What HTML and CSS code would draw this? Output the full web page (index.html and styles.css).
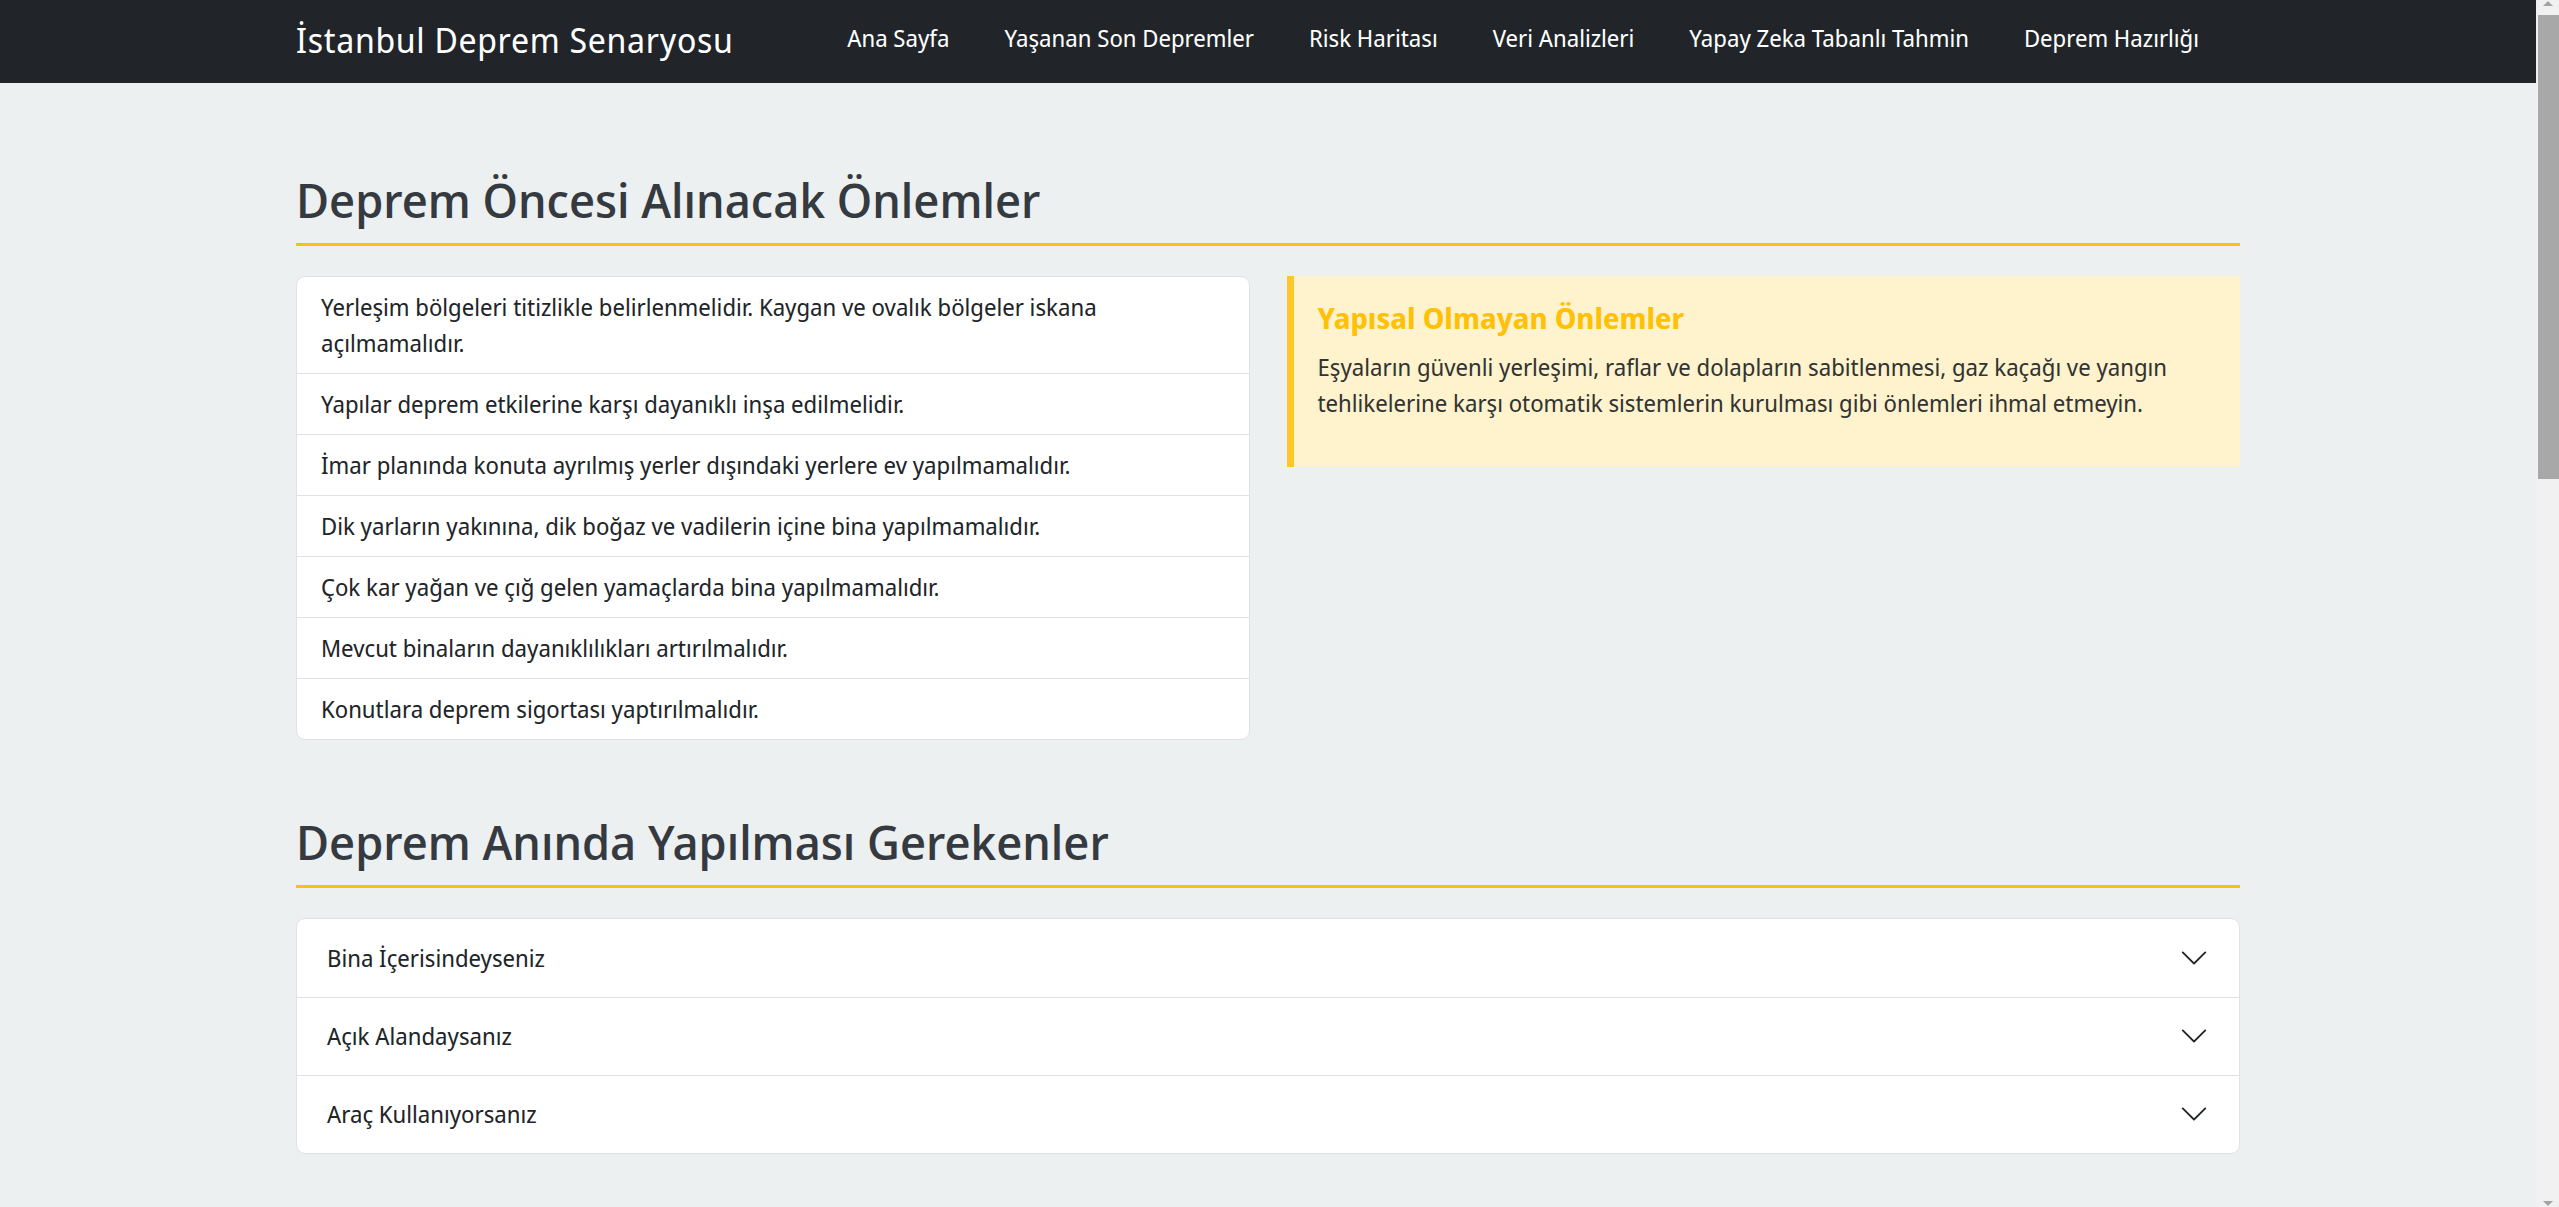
FILE: index.html
```html
<!DOCTYPE html>
<html lang="tr">
<head>
<meta charset="utf-8">
<title>İstanbul Deprem Senaryosu</title>
<link rel="stylesheet" href="styles.css">
</head>
<body>
<div class="page">
  <nav class="navbar">
    <div class="container nav-inner">
      <a class="brand" href="#">İstanbul Deprem Senaryosu</a>
      <ul class="nav-links">
        <li><a href="#">Ana Sayfa</a></li>
        <li><a href="#">Yaşanan Son Depremler</a></li>
        <li><a href="#">Risk Haritası</a></li>
        <li><a href="#">Veri Analizleri</a></li>
        <li><a href="#">Yapay Zeka Tabanlı Tahmin</a></li>
        <li><a href="#">Deprem Hazırlığı</a></li>
      </ul>
    </div>
  </nav>

  <main class="container main">
    <section class="section">
      <h2 class="section-title">Deprem Öncesi Alınacak Önlemler</h2>
      <div class="two-col">
        <ul class="list-group">
          <li class="list-item">Yerleşim bölgeleri titizlikle belirlenmelidir. Kaygan ve ovalık bölgeler iskana açılmamalıdır.</li>
          <li class="list-item">Yapılar deprem etkilerine karşı dayanıklı inşa edilmelidir.</li>
          <li class="list-item">İmar planında konuta ayrılmış yerler dışındaki yerlere ev yapılmamalıdır.</li>
          <li class="list-item">Dik yarların yakınına, dik boğaz ve vadilerin içine bina yapılmamalıdır.</li>
          <li class="list-item">Çok kar yağan ve çığ gelen yamaçlarda bina yapılmamalıdır.</li>
          <li class="list-item">Mevcut binaların dayanıklılıkları artırılmalıdır.</li>
          <li class="list-item">Konutlara deprem sigortası yaptırılmalıdır.</li>
        </ul>
        <div class="note">
          <h5 class="note-title">Yapısal Olmayan Önlemler</h5>
          <p class="note-text">Eşyaların güvenli yerleşimi, raflar ve dolapların sabitlenmesi, gaz kaçağı ve yangın tehlikelerine karşı otomatik sistemlerin kurulması gibi önlemleri ihmal etmeyin.</p>
        </div>
      </div>
    </section>

    <section class="section">
      <h2 class="section-title">Deprem Anında Yapılması Gerekenler</h2>
      <div class="accordion">
        <div class="acc-item">
          <button class="acc-button" type="button">
            <span>Bina İçerisindeyseniz</span>
            <svg class="chev" viewBox="0 0 16 16" width="30" height="30"><path fill="#212529" fill-rule="evenodd" d="M1.646 4.646a.5.5 0 0 1 .708 0L8 10.293l5.646-5.647a.5.5 0 0 1 .708.708l-6 6a.5.5 0 0 1-.708 0l-6-6a.5.5 0 0 1 0-.708z"/></svg>
          </button>
        </div>
        <div class="acc-item">
          <button class="acc-button" type="button">
            <span>Açık Alandaysanız</span>
            <svg class="chev" viewBox="0 0 16 16" width="30" height="30"><path fill="#212529" fill-rule="evenodd" d="M1.646 4.646a.5.5 0 0 1 .708 0L8 10.293l5.646-5.647a.5.5 0 0 1 .708.708l-6 6a.5.5 0 0 1-.708 0l-6-6a.5.5 0 0 1 0-.708z"/></svg>
          </button>
        </div>
        <div class="acc-item">
          <button class="acc-button" type="button">
            <span>Araç Kullanıyorsanız</span>
            <svg class="chev" viewBox="0 0 16 16" width="30" height="30"><path fill="#212529" fill-rule="evenodd" d="M1.646 4.646a.5.5 0 0 1 .708 0L8 10.293l5.646-5.647a.5.5 0 0 1 .708.708l-6 6a.5.5 0 0 1-.708 0l-6-6a.5.5 0 0 1 0-.708z"/></svg>
          </button>
        </div>
      </div>
    </section>
  </main>
</div>

<div class="fake-scrollbar" aria-hidden="true">
  <span class="sb-arrow sb-up"></span>
  <span class="sb-thumb"></span>
  <span class="sb-arrow sb-down"></span>
</div>
</body>
</html>
```
FILE: styles.css
```css
html {
  overflow: hidden;
}

body {
  margin: 0;
  background: #ecf0f1;
  color: #212529;
  font-family: "Noto Sans Display", "Noto Sans", sans-serif;
  font-size: 23.5px;
  line-height: 36px;
}

.page {
  margin-right: 23px;
}

.container {
  max-width: 1944px;
  margin: 0 auto;
}

/* Navbar */
.navbar {
  background: #212529;
  height: 83px;
}

.nav-inner {
  display: flex;
  align-items: flex-start;
  height: 100%;
}

.brand {
  color: #fff;
  text-decoration: none;
  font-size: 34px;
  letter-spacing: 0.7px;
  line-height: 40px;
  padding-top: 20px;
}

.nav-links {
  display: flex;
  gap: 55px;
  list-style: none;
  margin: 0 41px 0 auto;
  padding: 20px 0 0;
}

.nav-links a {
  color: #fff;
  text-decoration: none;
  font-size: 23.5px;
  line-height: 36px;
}

/* Main */
.main {
  padding-top: 87.5px;
}

.section + .section {
  margin-top: 72.5px;
}

.section-title {
  margin: 0 0 30.5px;
  padding-bottom: 14.5px;
  border-bottom: 3px solid #ffc107;
  color: #343a40;
  font-size: 48px;
  font-weight: 500;
  line-height: 57.6px;
}

.two-col {
  display: grid;
  grid-template-columns: 1fr 1fr;
  gap: 37px;
  align-items: start;
}

/* List group */
.list-group {
  list-style: none;
  margin: 0;
  padding: 0;
  background: #fff;
  border: 1px solid #dee2e6;
  border-radius: 9px;
}

.list-item {
  padding: 12px 24px;
}

.list-item + .list-item {
  border-top: 1px solid #dee2e6;
}

/* Warning note */
.note {
  background: #fff3cd;
  border-left: 7.5px solid #ffc62a;
  padding: 25px 24px 21.5px 24px;
}

.note-title {
  margin: 0 0 13.4px;
  color: #ffc107;
  font-size: 29px;
  font-weight: 700;
  line-height: 34.8px;
}

.note-text {
  margin: 0 0 24px;
  color: #333;
}

/* Accordion */
.accordion {
  background: #fff;
  border: 1px solid #dee2e6;
  border-radius: 9px;
  overflow: hidden;
}

.acc-item + .acc-item {
  border-top: 1px solid #dee2e6;
}

.acc-button {
  display: flex;
  align-items: center;
  width: 100%;
  margin: 0;
  padding: 20.67px 30px;
  border: 0;
  background: transparent;
  color: #212529;
  font-family: inherit;
  font-size: 23.5px;
  line-height: 36px;
  text-align: left;
  cursor: pointer;
}

.chev {
  flex: none;
  margin-left: auto;
}

/* Scrollbar replica (overlay at window edge) */
.fake-scrollbar {
  position: fixed;
  top: 0;
  right: 0;
  width: 23px;
  height: 100%;
  background: #f1f1f1;
}

.sb-thumb {
  position: absolute;
  top: 15px;
  left: 2px;
  right: 0;
  height: 464px;
  background: #a8a8a8;
}

.sb-arrow {
  position: absolute;
  left: 7px;
  width: 0;
  height: 0;
  border-left: 5.5px solid transparent;
  border-right: 5.5px solid transparent;
}

.sb-up {
  top: 1px;
  border-bottom: 5.5px solid #a3a3a3;
}

.sb-down {
  bottom: 1px;
  border-top: 5.5px solid #a3a3a3;
}
```
